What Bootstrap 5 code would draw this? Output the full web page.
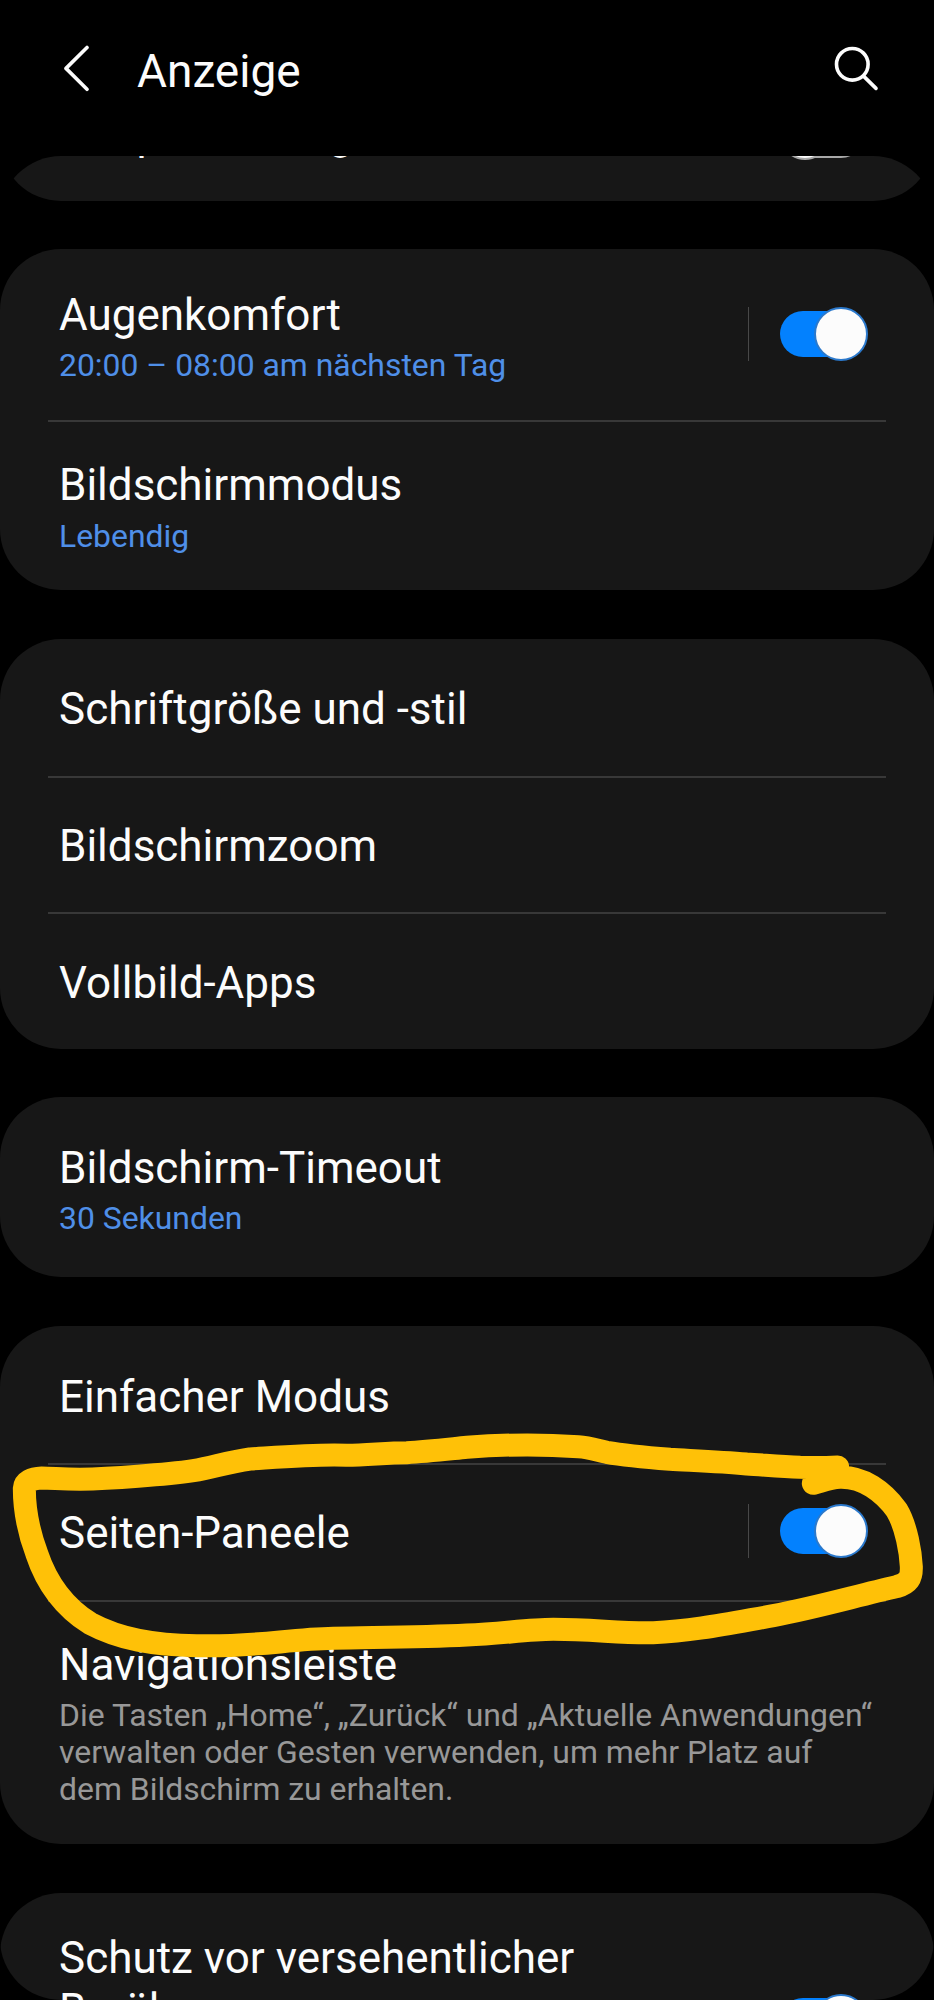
<!DOCTYPE html>
<html lang="de">
<head>
  <meta charset="UTF-8">
  <meta name="viewport" content="width=device-width, initial-scale=1">
  <title>Anzeige</title>
  <link href="https://cdn.jsdelivr.net/npm/bootstrap@5.3.0/dist/css/bootstrap.min.css" rel="stylesheet">
  <style>
    body { background: #000; color: #fcfcfc; font-family: Roboto, sans-serif; height: 2000px; overflow: hidden; }
    .app-header { height: 156px; padding: 44px 54px 0 64px; }
    .app-title { font-size: 46px; line-height: 54px; margin-left: 48px; }
    .app-header svg { fill: none; stroke: #fcfcfc; stroke-width: 3.6; stroke-linecap: round; stroke-linejoin: round; }

    /* scroll area clips the cards with its own rounded corners */
    .settings { height: 1844px; border-radius: 61px; gap: 48.6px; }
    .group { background: #171717; border: 0; border-radius: 61px; flex: none; color: inherit; }
    .group .list-group { margin: 0 48px; border-radius: 0; }
    .group .list-group-item { background: transparent; color: inherit; border-color: #383838; border-width: 0 0 2px; padding: 43.3px 0 0 11px; height: 136.8px; }
    .group .list-group-item:first-child { padding-top: 45.6px; height: 138.8px; }
    .group .list-group-item:last-child { border-bottom: 0; height: 134.4px; }
    .group .two-line.list-group-item { padding-top: 38.1px; height: 168.4px; }
    .group .two-line.list-group-item:first-child { padding-top: 40.6px; height: 172.6px; }
    .group .single.list-group-item { padding-top: 45.2px; height: 180px; }
    .group .long.list-group-item { height: 242.3px; }
    .group-cut { margin-top: -89.7px; }
    .group-cut .list-group-item:first-child { padding-top: 42.7px; }
    .group-last { height: 190px; }

    .item-title { font-size: 44px; line-height: 51.6px; }
    .item-sub { font-size: 31.9px; line-height: 37px; margin-top: 6px; white-space: nowrap; }
    .item-value { color: #4f8fe8; }
    .item-hint { color: #989898; }

    .toggle { position: relative; flex: none; width: 88px; height: 54px; padding-top: 4px; }
    .toggle-wrap { height: 54px; margin-right: 18px; }
    .toggle-sep { width: 1.5px; height: 54px; background: #484848; margin-right: 31px; }
    .toggle-track { width: 84px; height: 46px; border-radius: 23px; background: #0381fe; }
    .toggle-thumb { position: absolute; top: 0; right: 0; width: 54px; height: 54px; border-radius: 50%; background: #fcfcfc; border: 2.5px solid #2b79cc; }
    .toggle-off .toggle-track { background: #171717; border: 2px solid #a8a8a8; }
    .toggle-off .toggle-thumb { right: 38px; border-color: #a8a8a8; width: 50px; height: 50px; top: 2px; }
    .toggle-cut { margin-top: -1px; }
    .toggle-high { margin-top: -4px; }
    .toggle-low { margin-top: 17px; }
    .toggle-last { margin-top: 61px; }

    .marker { position: absolute; left: 0; top: 94px; z-index: 2; fill: none; stroke: #ffc107; stroke-width: 69; stroke-linecap: round; stroke-linejoin: round; pointer-events: none; }
  </style>
</head>
<body>

<header class="app-header d-flex align-items-start">
  <svg width="25" height="48" viewBox="64 44 25 48"><path d="M87 47.5 66 68.4 87 89.3"/></svg>
  <h1 class="app-title fw-normal mb-0">Anzeige</h1>
  <svg class="ms-auto" width="46" height="48" viewBox="834 44 46 48"><circle cx="852.3" cy="64.3" r="15.8"/><path d="M863.8 76.4 876 88.4"/></svg>
</header>

<main class="settings d-flex flex-column overflow-hidden">

  <section class="card group group-cut">
    <ul class="list-group list-group-flush">
      <li class="list-group-item d-flex justify-content-between">
        <div class="item-title">Adaptive Helligkeit</div>
        <div class="toggle-wrap toggle-cut d-flex">
          <div class="toggle toggle-off"><div class="toggle-track"></div><div class="toggle-thumb"></div></div>
        </div>
      </li>
    </ul>
  </section>

  <section class="card group">
    <ul class="list-group list-group-flush">
      <li class="list-group-item two-line d-flex justify-content-between">
        <div>
          <div class="item-title">Augenkomfort</div>
          <div class="item-sub item-value">20:00 – 08:00 am nächsten Tag</div>
        </div>
        <div class="toggle-wrap toggle-low d-flex">
          <div class="toggle-sep"></div>
          <div class="toggle"><div class="toggle-track"></div><div class="toggle-thumb"></div></div>
        </div>
      </li>
      <li class="list-group-item two-line">
        <div class="item-title">Bildschirmmodus</div>
        <div class="item-sub item-value">Lebendig</div>
      </li>
    </ul>
  </section>

  <section class="card group">
    <ul class="list-group list-group-flush">
      <li class="list-group-item"><div class="item-title">Schriftgröße und -stil</div></li>
      <li class="list-group-item"><div class="item-title">Bildschirmzoom</div></li>
      <li class="list-group-item"><div class="item-title">Vollbild-Apps</div></li>
    </ul>
  </section>

  <section class="card group">
    <ul class="list-group list-group-flush">
      <li class="list-group-item single">
        <div class="item-title">Bildschirm-Timeout</div>
        <div class="item-sub item-value">30 Sekunden</div>
      </li>
    </ul>
  </section>

  <section class="card group">
    <ul class="list-group list-group-flush">
      <li class="list-group-item"><div class="item-title">Einfacher Modus</div></li>
      <li class="list-group-item d-flex justify-content-between">
        <div class="item-title">Seiten-Paneele</div>
        <div class="toggle-wrap toggle-high d-flex">
          <div class="toggle-sep"></div>
          <div class="toggle"><div class="toggle-track"></div><div class="toggle-thumb"></div></div>
        </div>
      </li>
      <li class="list-group-item two-line long">
        <div class="item-title">Navigationsleiste</div>
        <div class="item-sub item-hint">Die Tasten „Home“, „Zurück“ und „Aktuelle Anwendungen“<br>verwalten oder Gesten verwenden, um mehr Platz auf<br>dem Bildschirm zu erhalten.</div>
      </li>
    </ul>
    <!-- hand-drawn marker around "Seiten-Paneele" -->
    <svg class="marker" width="934" height="290" viewBox="0 0 2802 870">
      <path d="M2513 141 C2470 143 2440 143 2400 142 C2340 139 2290 135 2240 132 C2160 125 2080 122 2010 118 C1950 113 1880 107 1820 97 C1795 92 1770 82 1735 80 C1620 72 1500 74 1401 82 C1340 88 1280 95 1220 98 C1160 98 1100 106 1040 106 C960 102 860 110 750 117 C680 127 640 142 580 152 C500 164 330 176 240 178 C180 178 160 174 125 174 C95 175 74 185 73 205 C73 260 80 320 110 400 C140 490 190 560 270 610 C360 658 460 675 590 677 C760 682 860 658 1000 655 C1130 652 1260 652 1401 645 C1500 642 1580 628 1660 628 C1780 628 1860 640 1960 638 C2080 634 2200 608 2320 587 C2450 562 2560 530 2690 500 C2725 490 2735 475 2734 440 C2732 400 2720 320 2690 270 C2650 215 2590 170 2520 172 C2490 173 2470 182 2440 190"/>
    </svg>
  </section>

  <section class="card group group-last">
    <ul class="list-group list-group-flush">
      <li class="list-group-item two-line d-flex justify-content-between">
        <div class="item-title">Schutz vor versehentlicher<br>Berührung</div>
        <div class="toggle-wrap toggle-last d-flex">
          <div class="toggle"><div class="toggle-track"></div><div class="toggle-thumb"></div></div>
        </div>
      </li>
    </ul>
  </section>

</main>

<script src="https://cdn.jsdelivr.net/npm/bootstrap@5.3.0/dist/js/bootstrap.bundle.min.js"></script>
</body>
</html>
